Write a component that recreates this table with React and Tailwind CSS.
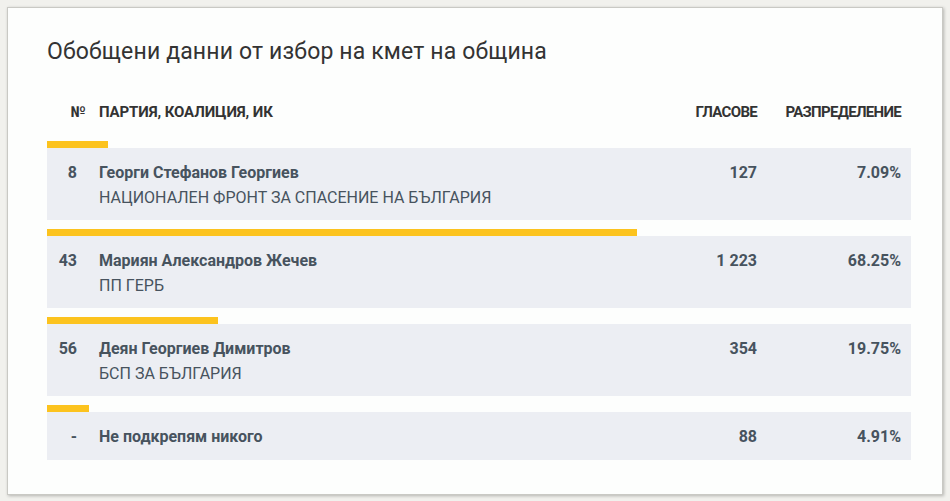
const rows = [
  { no: "8", name: "Георги Стефанов Георгиев", party: "НАЦИОНАЛЕН ФРОНТ ЗА СПАСЕНИЕ НА БЪЛГАРИЯ", votes: "127", pct: 7.09 },
  { no: "43", name: "Мариян Александров Жечев", party: "ПП ГЕРБ", votes: "1 223", pct: 68.25 },
  { no: "56", name: "Деян Георгиев Димитров", party: "БСП ЗА БЪЛГАРИЯ", votes: "354", pct: 19.75 },
  { no: "-", name: "Не подкрепям никого", party: null, votes: "88", pct: 4.91 },
]

export default function App() {
  return (
    <div className="w-[950px] h-[501px] bg-[#f1f1ed] p-[7px] font-['Roboto',sans-serif]">
      <div className="w-[936px] h-[488px] bg-[#fdfefd] border border-[#c9c9c4] shadow-[1px_1px_3px_rgba(0,0,0,0.25)] pl-[39px] pt-[29px]">
        <h1 className="text-[23px] leading-[30px] text-[#333] tracking-[0.15px]">
          Обобщени данни от избор на кмет на община
        </h1>

        <div className="w-[864px] mt-[31px]">
          <div className="flex items-center h-[28px] text-[15px] font-bold text-[#333] uppercase tracking-[-0.1px]">
            <div className="w-[52px] text-center pl-[10px]">№</div>
            <div className="flex-1">Партия, коалиция, ИК</div>
            <div className="w-[120px] text-right tracking-[-0.7px]">Гласове</div>
            <div className="w-[154px] text-right pr-[10px] tracking-[-0.7px]">Разпределение</div>
          </div>

          <div className="mt-[15px] flex flex-col gap-[9px]">
            {rows.map((r) => (
              <div key={r.no}>
                <div className="h-[7px] bg-[#fcc31e]" style={{ width: `${r.pct}%` }} />
                <div className={`bg-[#eceef3] text-[#47535e] flex items-start pt-[12px] ${r.party ? "pb-[10px]" : "pb-[11px]"}`}>
                  <div className="w-[52px] text-right pr-[22px] text-[16px] leading-[25px] font-bold">{r.no}</div>
                  <div className="flex-1">
                    <div className="text-[16px] leading-[25px] font-bold">{r.name}</div>
                    {r.party && (
                      <div className="text-[16px] leading-[25px]">{r.party}</div>
                    )}
                  </div>
                  <div className="w-[120px] text-right text-[16px] leading-[25px] font-bold">{r.votes}</div>
                  <div className="w-[154px] text-right pr-[10px] text-[16px] leading-[25px] font-bold">{r.pct.toFixed(2)}%</div>
                </div>
              </div>
            ))}
          </div>
        </div>
      </div>
    </div>
  )
}
